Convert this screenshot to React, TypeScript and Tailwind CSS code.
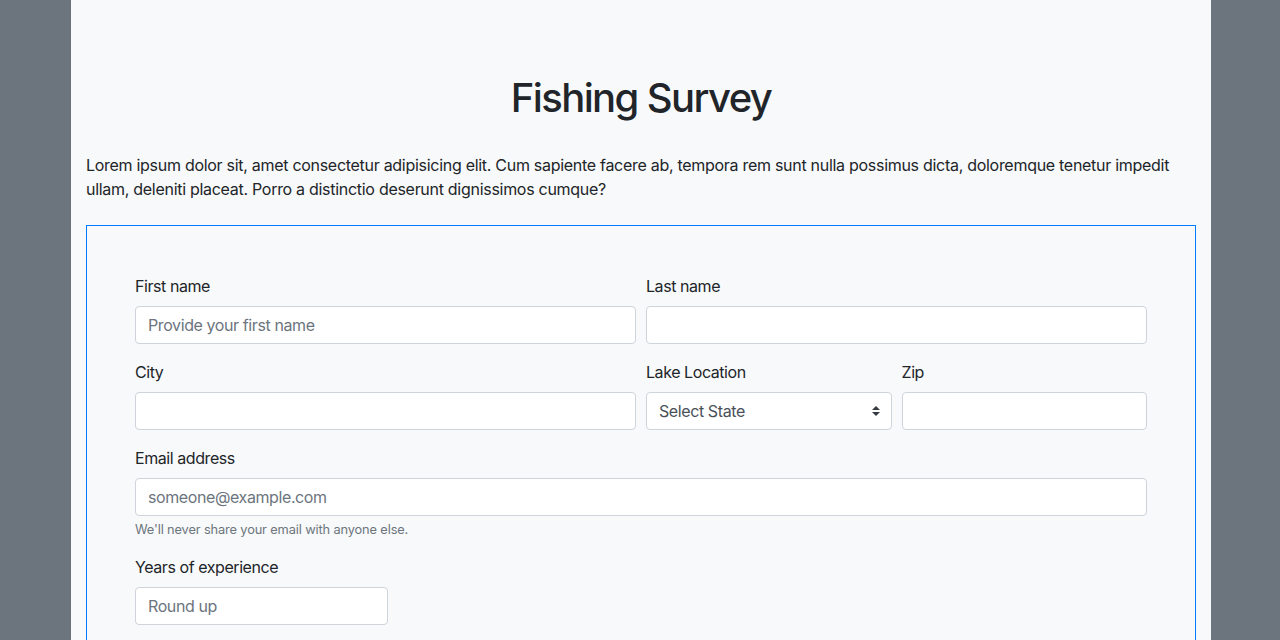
import { ChangeEvent, useState } from "react";

const inputCls =
  "block w-full h-[38px] px-3 py-[6px] text-base leading-6 text-[#495057] bg-white border border-[#ced4da] rounded-[4px] placeholder:text-[#6c757d] outline-none focus:border-[#80bdff] tracking-[-0.025em]";

const labelCls = "block mb-2 text-base leading-6 text-[#212529]";

function Field({
  label,
  placeholder,
  value,
  onChange,
  className = "",
}: {
  label: string;
  placeholder?: string;
  value: string;
  onChange: (e: ChangeEvent<HTMLInputElement>) => void;
  className?: string;
}) {
  return (
    <div className={className}>
      <label className={labelCls}>{label}</label>
      <input className={inputCls} placeholder={placeholder} value={value} onChange={onChange} />
    </div>
  );
}

export default function App() {
  const [form, setForm] = useState({
    first: "",
    last: "",
    city: "",
    state: "",
    zip: "",
    email: "",
    years: "",
  });

  const set = (k: keyof typeof form) => (e: ChangeEvent<HTMLInputElement | HTMLSelectElement>) =>
    setForm((f) => ({ ...f, [k]: e.target.value }));

  return (
    <div
      className="min-h-screen bg-[#6c757d] tracking-[-0.027em]"
      style={{ fontFamily: "Inter, 'Liberation Sans', sans-serif" }}
    >
      <div className="ml-[71px] w-[1140px] min-h-screen bg-[#f8f9fa] px-[15px] pt-[74px]">
        {/* Title */}
        <h1 className="text-center text-[40px] leading-[48px] font-medium text-[#212529] mb-[31px] tracking-[-0.04em]">
          Fishing Survey
        </h1>

        <p className="text-base leading-6 text-[#212529] mb-6 tracking-[-0.018em]">
          Lorem ipsum dolor sit, amet consectetur adipisicing elit. Cum sapiente facere ab, tempora rem
          sunt nulla possimus dicta, doloremque tenetur impedit ullam, deleniti placeat. Porro a
          distinctio deserunt dignissimos cumque?
        </p>

        {/* Survey form */}
        <form className="border border-[#007bff] px-12 pt-12 pb-12">
          <div className="grid grid-cols-2 gap-x-[10px] mb-4">
            <Field label="First name" placeholder="Provide your first name" value={form.first} onChange={set("first")} />
            <Field label="Last name" value={form.last} onChange={set("last")} />
          </div>

          <div className="grid grid-cols-4 gap-x-[10px] mb-4">
            <Field label="City" className="col-span-2" value={form.city} onChange={set("city")} />
            <div>
              <label className={labelCls}>Lake Location</label>
              <div className="relative">
                <select
                  className={inputCls + " appearance-none pr-7"}
                  value={form.state}
                  onChange={set("state")}
                >
                  <option value="">Select State</option>
                  <option>Minnesota</option>
                  <option>Wisconsin</option>
                  <option>Michigan</option>
                </select>
                <svg
                  className="pointer-events-none absolute right-[12px] top-[14px]"
                  width="8"
                  height="10"
                  viewBox="0 0 4 5"
                >
                  <path fill="#343a40" d="M2 0L0 2h4zm0 5L0 3h4z" />
                </svg>
              </div>
            </div>
            <Field label="Zip" value={form.zip} onChange={set("zip")} />
          </div>

          <div className="mb-4">
            <label className={labelCls}>Email address</label>
            <input
              type="email"
              className={inputCls}
              placeholder="someone@example.com"
              value={form.email}
              onChange={set("email")}
            />
            <small className="block mt-1 text-[12.8px] leading-[19.2px] text-[#6c757d] tracking-[-0.01em]">
              We'll never share your email with anyone else.
            </small>
          </div>

          <Field
            label="Years of experience"
            placeholder="Round up"
            className="w-[253px] mb-4"
            value={form.years}
            onChange={set("years")}
          />
        </form>
      </div>
    </div>
  );
}
